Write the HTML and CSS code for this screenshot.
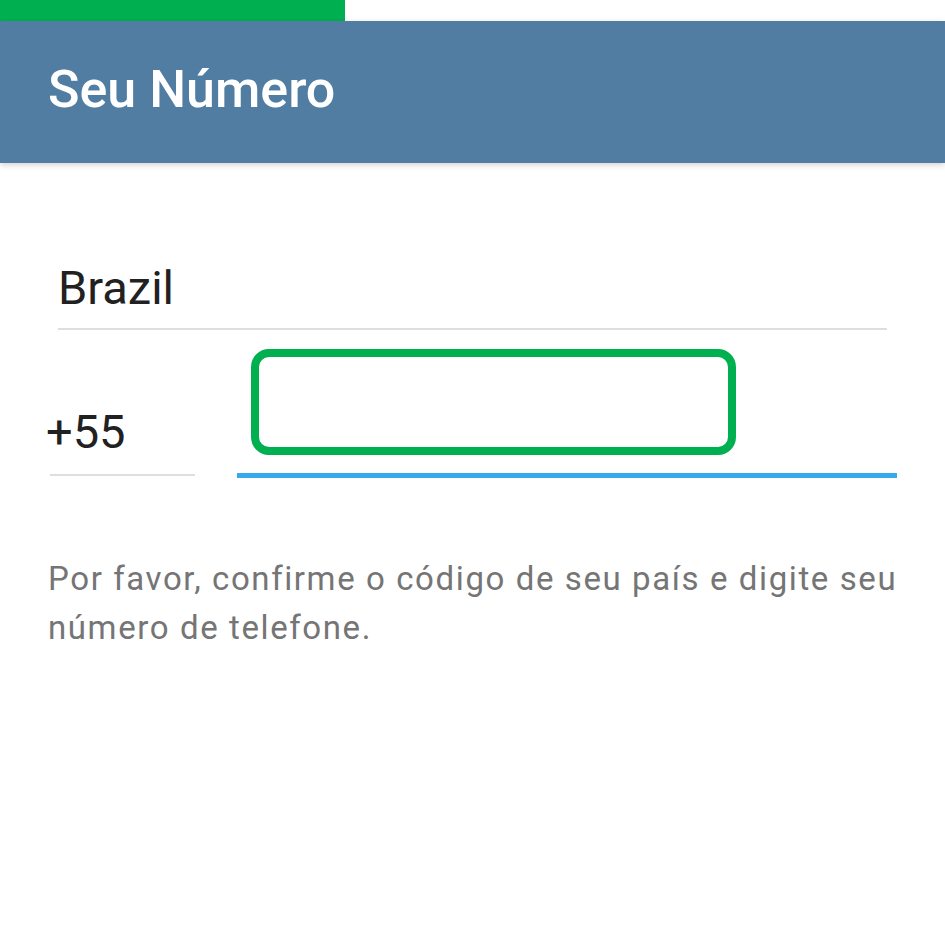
FILE: index.html
```html
<!DOCTYPE html>
<html lang="pt">
<head>
<meta charset="utf-8">
<title>Seu Número</title>
<link rel="stylesheet" href="styles.css">
</head>
<body>
<div class="progress"><div class="progress-fill"></div></div>
<header class="appbar">
  <h1 class="title">Seu Número</h1>
</header>
<main class="content">
  <div class="country-field">Brazil</div>
  <div class="phone-row">
    <div class="code-field">+55</div>
    <div class="number-field">
      <div class="highlight"></div>
    </div>
  </div>
  <p class="hint">Por favor, confirme o código de seu país e digite seu número de telefone.</p>
</main>
</body>
</html>
```
FILE: styles.css
```css
html, body {
  margin: 0;
  padding: 0;
  background: #ffffff;
}
body {
  font-family: Roboto, "Noto Sans", "Liberation Sans", sans-serif;
  width: 945px;
  height: 945px;
  overflow: hidden;
}
.progress {
  height: 21px;
  background: #ffffff;
}
.progress-fill {
  width: 345px;
  height: 100%;
  background: #00b050;
}
.appbar {
  box-sizing: border-box;
  height: 142px;
  background: #517da2;
  padding: 39px 0 0 48px;
  box-shadow: 0 2px 6px rgba(0, 0, 0, 0.18);
  position: relative;
  z-index: 1;
}
.title {
  margin: 0;
  color: #ffffff;
  font-size: 52px;
  font-weight: 500;
  line-height: 60px;
}
.content {
  display: flex;
  flex-direction: column;
}
.country-field {
  margin: 97px 58px 0 58px;
  font-size: 47px;
  line-height: 56px;
  color: #212121;
  padding-bottom: 12px;
  border-bottom: 2px solid #dedede;
}
.phone-row {
  display: flex;
  align-items: flex-start;
}
.code-field {
  box-sizing: border-box;
  margin-left: 50px;
  width: 145px;
  height: 146px;
  padding-top: 74px;
  font-size: 47px;
  line-height: 56px;
  color: #212121;
  text-indent: -4px;
  border-bottom: 2px solid #dedede;
}
.number-field {
  box-sizing: border-box;
  position: relative;
  margin-left: 42px;
  width: 660px;
  height: 148px;
  border-bottom: 5px solid #39a9ee;
}
.highlight {
  position: absolute;
  left: 14px;
  top: 19px;
  width: 485px;
  height: 106px;
  box-sizing: border-box;
  border: 8px solid #00b050;
  border-radius: 18px;
}
.hint {
  margin: 76px 36px 0 48px;
  font-size: 33px;
  line-height: 49px;
  letter-spacing: 1.6px;
  color: #757575;
}
```
